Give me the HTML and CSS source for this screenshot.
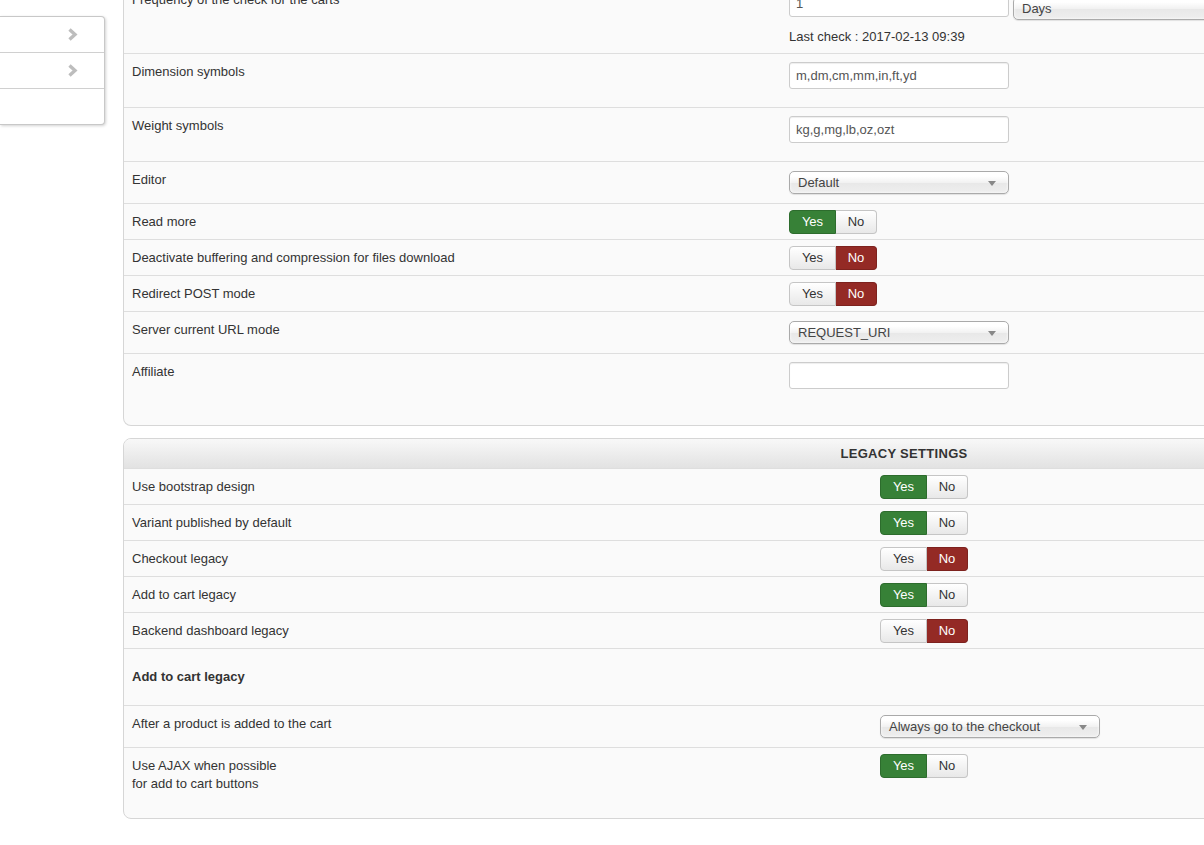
FILE: index.html
```html
<!DOCTYPE html>
<html lang="en">
<head>
  <meta charset="UTF-8">
  <meta name="viewport" content="width=device-width, initial-scale=1.0">
  <title>Configuration - Features</title>
  <link rel="stylesheet" href="styles.css">
</head>
<body>
  <div class="layout">
    <!-- left submenu, mostly scrolled out of view -->
    <aside class="submenu">
      <a class="submenu-item" href="#"><span></span>
        <svg class="chev" width="11" height="13" viewBox="0 0 11 13"><path d="M2.5 1.5 L8 6.5 L2.5 11.5" fill="none" stroke="#bdbdbd" stroke-width="3.4"/></svg>
      </a>
      <a class="submenu-item" href="#"><span></span>
        <svg class="chev" width="11" height="13" viewBox="0 0 11 13"><path d="M2.5 1.5 L8 6.5 L2.5 11.5" fill="none" stroke="#bdbdbd" stroke-width="3.4"/></svg>
      </a>
      <a class="submenu-item" href="#"><span></span></a>
    </aside>

    <main class="content">
      <section class="panel panel-main">
        <div class="row">
          <div class="label">Frequency of the check for the carts</div>
          <div class="ctrl">
            <div class="freq">
              <input class="txt" type="text" value="1">
              <div class="select select-days">Days</div>
            </div>
            <div class="last-check">Last check : 2017-02-13 09:39</div>
          </div>
        </div>
        <div class="row">
          <div class="label">Dimension symbols</div>
          <div class="ctrl"><input class="txt" type="text" value="m,dm,cm,mm,in,ft,yd"></div>
        </div>
        <div class="row">
          <div class="label">Weight symbols</div>
          <div class="ctrl"><input class="txt" type="text" value="kg,g,mg,lb,oz,ozt"></div>
        </div>
        <div class="row">
          <div class="label">Editor</div>
          <div class="ctrl"><div class="select">Default</div></div>
        </div>
        <div class="row">
          <div class="label">Read more</div>
          <div class="ctrl"><div class="yesno"><span class="yes on">Yes</span><span class="no">No</span></div></div>
        </div>
        <div class="row">
          <div class="label">Deactivate buffering and compression for files download</div>
          <div class="ctrl"><div class="yesno"><span class="yes">Yes</span><span class="no on">No</span></div></div>
        </div>
        <div class="row">
          <div class="label">Redirect POST mode</div>
          <div class="ctrl"><div class="yesno"><span class="yes">Yes</span><span class="no on">No</span></div></div>
        </div>
        <div class="row">
          <div class="label">Server current URL mode</div>
          <div class="ctrl"><div class="select">REQUEST_URI</div></div>
        </div>
        <div class="row">
          <div class="label">Affiliate</div>
          <div class="ctrl"><input class="txt" type="text" value=""></div>
        </div>
      </section>

      <section class="panel panel-legacy">
        <div class="panel-head">LEGACY SETTINGS</div>
        <div class="row">
          <div class="label">Use bootstrap design</div>
          <div class="ctrl"><div class="yesno"><span class="yes on">Yes</span><span class="no">No</span></div></div>
        </div>
        <div class="row">
          <div class="label">Variant published by default</div>
          <div class="ctrl"><div class="yesno"><span class="yes on">Yes</span><span class="no">No</span></div></div>
        </div>
        <div class="row">
          <div class="label">Checkout legacy</div>
          <div class="ctrl"><div class="yesno"><span class="yes">Yes</span><span class="no on">No</span></div></div>
        </div>
        <div class="row">
          <div class="label">Add to cart legacy</div>
          <div class="ctrl"><div class="yesno"><span class="yes on">Yes</span><span class="no">No</span></div></div>
        </div>
        <div class="row">
          <div class="label">Backend dashboard legacy</div>
          <div class="ctrl"><div class="yesno"><span class="yes">Yes</span><span class="no on">No</span></div></div>
        </div>
        <div class="row row-title">
          <div class="sub-title">Add to cart legacy</div>
        </div>
        <div class="row">
          <div class="label">After a product is added to the cart</div>
          <div class="ctrl"><div class="select">Always go to the checkout</div></div>
        </div>
        <div class="row">
          <div class="label">Use AJAX when possible<br>for add to cart buttons</div>
          <div class="ctrl"><div class="yesno"><span class="yes on">Yes</span><span class="no">No</span></div></div>
        </div>
      </section>
    </main>
  </div>
</body>
</html>
```

FILE: styles.css
```css
html, body {
  overflow: hidden;
}
body {
  margin: 0;
  background: #fff;
  font-family: "Liberation Sans", Arial, sans-serif;
  font-size: 13px;
  line-height: 18px;
  color: #333;
}
.layout {
  display: flex;
  align-items: flex-start;
  gap: 18px;
}

/* submenu */
.submenu {
  flex: 0 0 105px;
  margin-top: 16px;
  background: #fff;
  border: 1px solid #c8c8c8;
  border-left: none;
  border-radius: 0 4px 4px 0;
  box-shadow: 1px 1px 3px rgba(0,0,0,0.18);
  box-sizing: border-box;
}
.submenu-item {
  display: flex;
  justify-content: flex-end;
  align-items: center;
  height: 35px;
  padding-right: 26px;
  border-top: 1px solid #d0d0d0;
}
.submenu-item:first-child {
  border-top: none;
}
.chev {
  display: block;
}

/* panels */
.content {
  flex: 0 0 1562px;
  margin-top: -19px;
}
.panel {
  background: #fafafa;
  border: 1px solid #d6d6d6;
  border-radius: 8px;
  padding-bottom: 18px;
  overflow: hidden;
}
.panel-main {
  border-top-color: transparent;
  border-radius: 0 0 8px 8px;
}
.panel-legacy {
  margin-top: 12px;
  padding-bottom: 17px;
}
.panel-head {
  height: 29px;
  line-height: 29px;
  text-align: center;
  font-weight: bold;
  letter-spacing: 0.3px;
  background: linear-gradient(#f8f8f8, #e2e2e2);
}

.row {
  display: grid;
  grid-template-columns: 665px 1fr;
  border-top: 1px solid #dedede;
}
.panel-main .row:first-child {
  border-top: none;
}
.panel-legacy .row {
  grid-template-columns: 756px 1fr;
}
.label {
  padding: 9px 8px 8px;
}
.ctrl {
  padding: 6px 0 5px;
}
.row-title {
  display: block;
}
.sub-title {
  padding: 19px 8px;
  font-weight: bold;
}

/* form controls */
.txt {
  display: block;
  box-sizing: border-box;
  width: 220px;
  height: 27px;
  margin: 2px 0 13px;
  padding: 4px 6px;
  border: 1px solid #ccc;
  border-radius: 3px;
  background: #fff;
  box-shadow: inset 0 1px 1px rgba(0,0,0,0.07);
  font: 13px "Liberation Sans", Arial, sans-serif;
  color: #555;
}
.select {
  position: relative;
  box-sizing: border-box;
  width: 220px;
  height: 23px;
  margin: 3px 0 4px;
  padding: 0 8px;
  line-height: 22px;
  border: 1px solid #aaa;
  border-radius: 5px;
  background: linear-gradient(#fff 20%, #f2f2f2 50%, #e8e8e8 52%, #eee);
  box-shadow: 0 0 3px #fff inset, 0 1px 1px rgba(0,0,0,0.1);
  color: #444;
}
.select::after {
  content: "";
  position: absolute;
  right: 12px;
  top: 9px;
  border-left: 4px solid transparent;
  border-right: 4px solid transparent;
  border-top: 5px solid #888;
}
.freq {
  display: flex;
  align-items: flex-start;
  gap: 4px;
}
.freq .txt {
  margin-bottom: 0;
}
.select-days {
  width: 400px;
  margin: 9px 0 0;
}
.last-check {
  margin: 8px 0 2px;
}

/* yes / no switch */
.yesno {
  display: flex;
  width: max-content;
  height: 24px;
  line-height: 22px;
}
.yesno span {
  box-sizing: border-box;
  text-align: center;
  border: 1px solid #c5c5c5;
  background: linear-gradient(#fff, #e8e8e8);
  color: #333;
}
.yesno .yes {
  width: 47px;
  border-radius: 4px 0 0 4px;
}
.yesno .no {
  width: 41px;
  border-left: none;
  border-radius: 0 4px 4px 0;
}
.yesno .yes.on {
  background: #378137;
  border-color: #2d6c2d;
  color: #fff;
}
.yesno .no.on {
  background: #942a25;
  border-color: #7d221e;
  color: #fff;
}
```
